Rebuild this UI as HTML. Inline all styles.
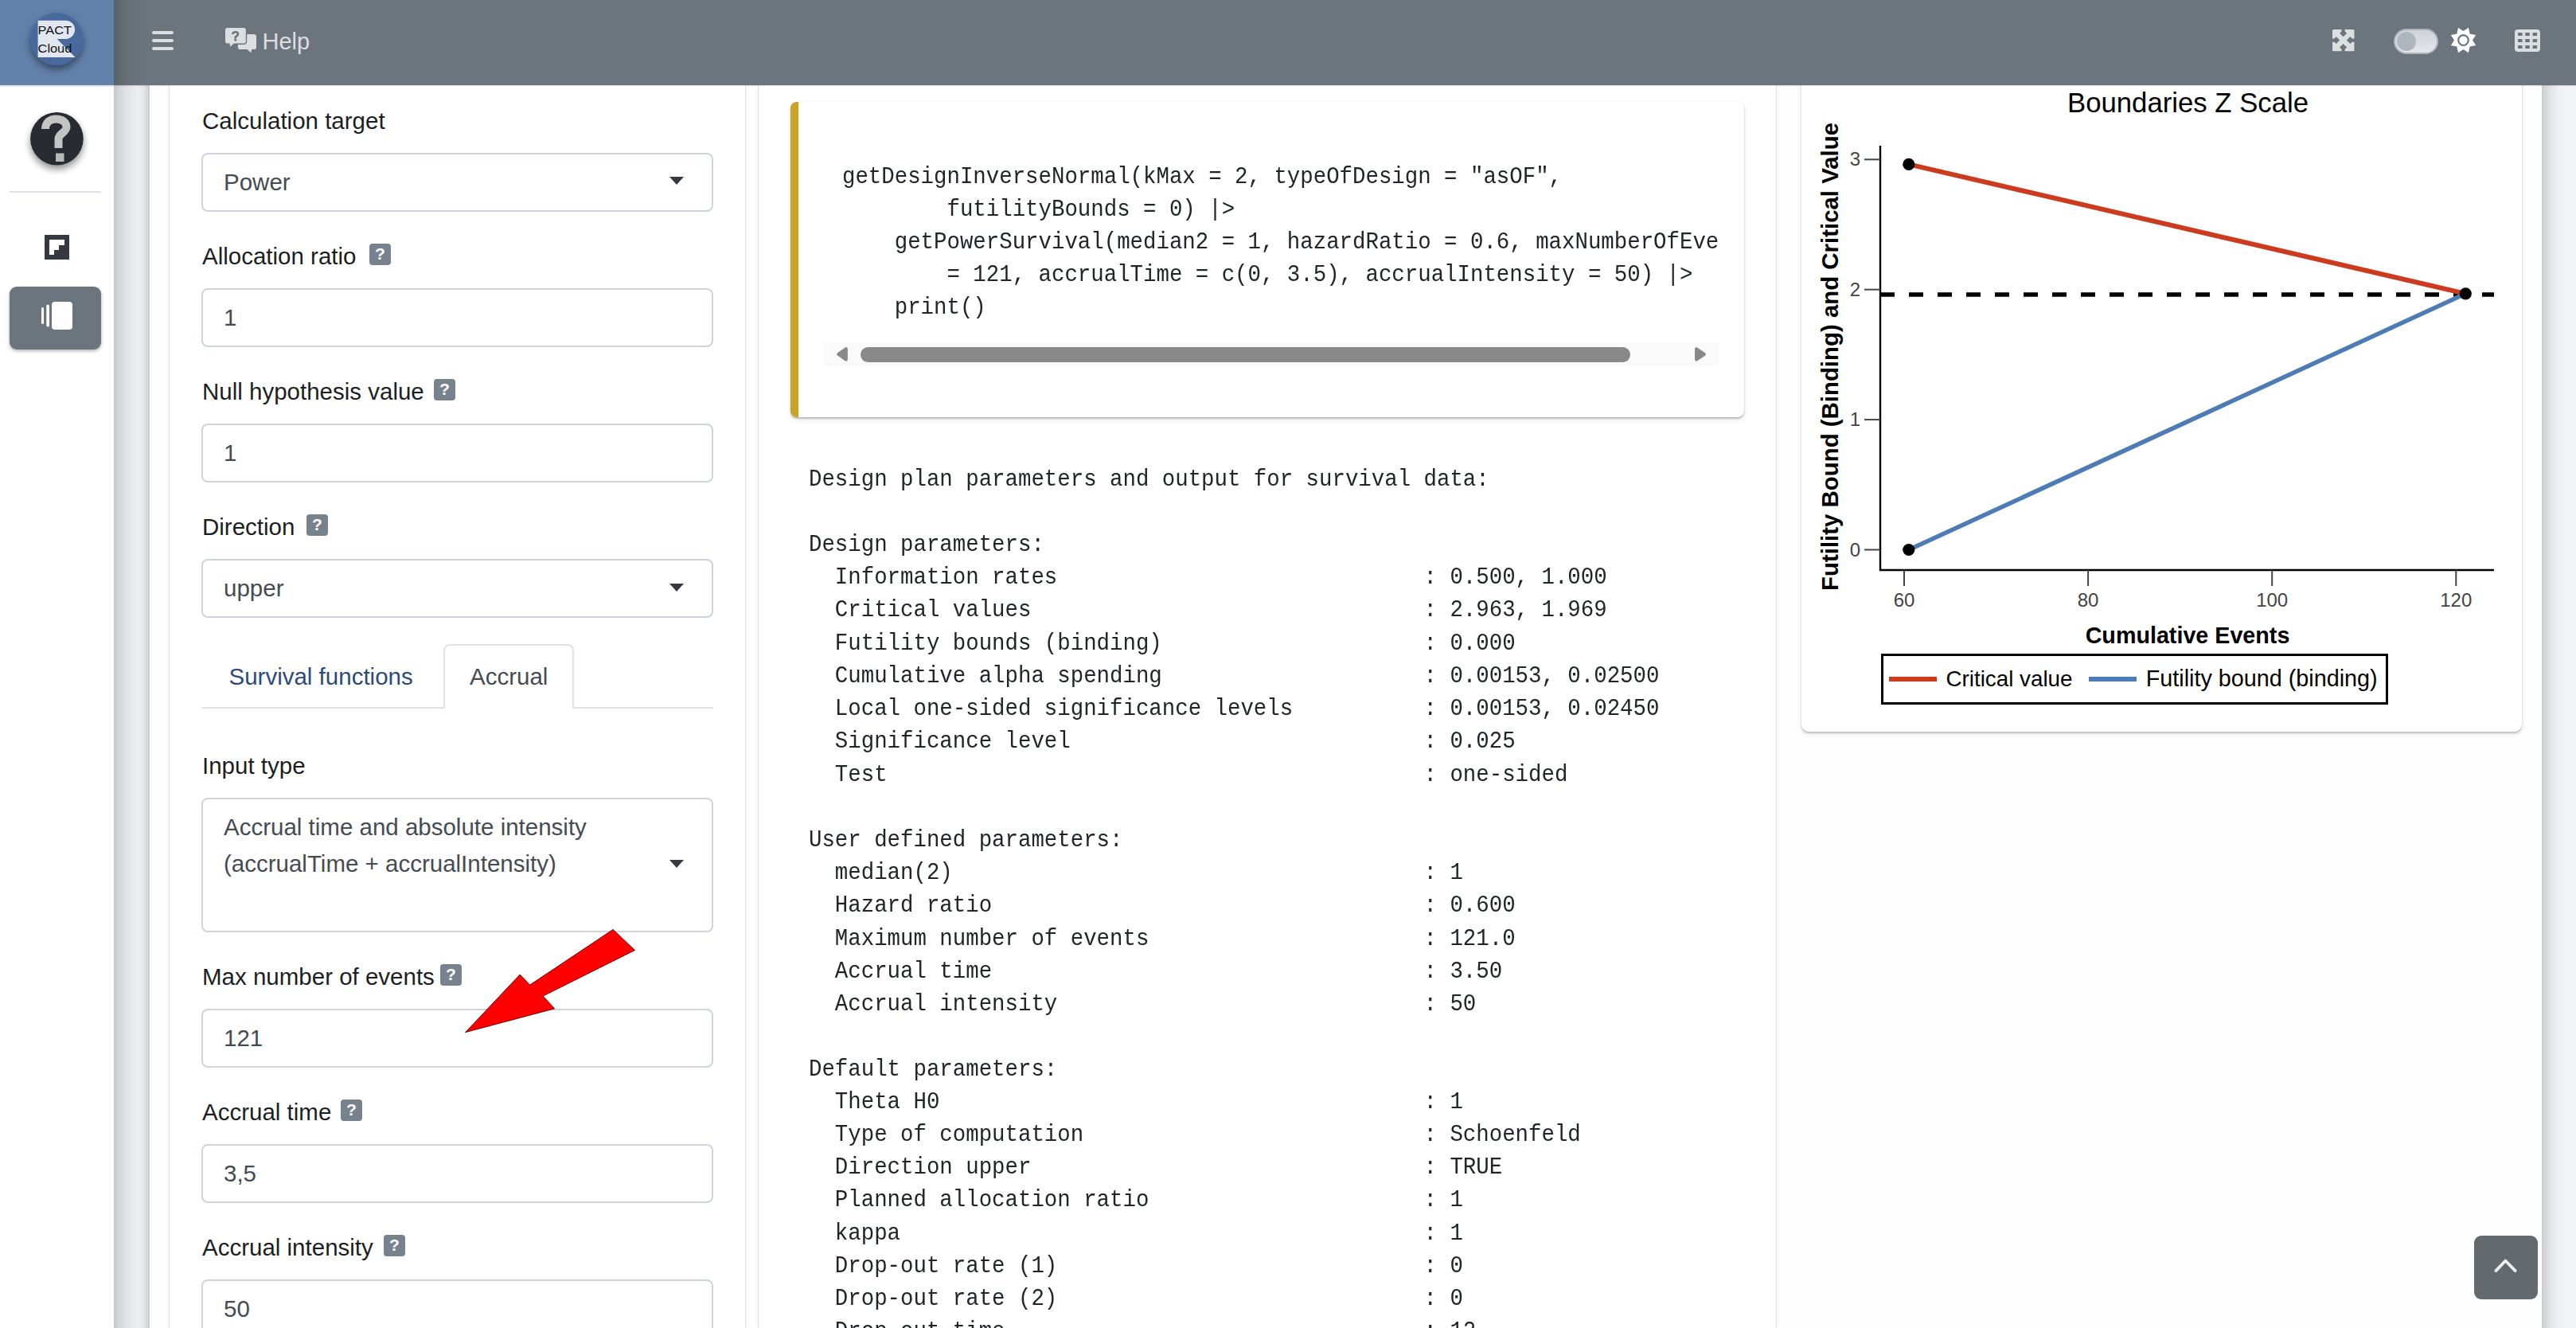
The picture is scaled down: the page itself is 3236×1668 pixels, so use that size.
<!DOCTYPE html>
<html><head><meta charset="utf-8"><title>rpact</title><style>
html,body{margin:0;padding:0}
body{width:3236px;height:1668px;overflow:hidden;position:relative;background:#f4f6f9;font-family:"Liberation Sans",sans-serif;color:#212529}
.abs{position:absolute}
#header{left:0;top:0;width:3236px;height:107px;background:#6c757d;box-shadow:0 1px 1px rgba(0,0,0,.12)}
#brand{left:0;top:0;width:143px;height:107px;background:#6180aa}
#sidebar{left:0;top:107px;width:143px;height:1561px;background:#fff;border-top:2px solid #e4e6ea;box-sizing:border-box}
#lstrip{left:143px;top:107px;width:45px;height:1561px;background:linear-gradient(90deg,#c3c5c9 0px,#d3d5d9 6px,#e4e5e9 18px,#eceef2 30px,#e4e5e9 38px,#cdcfd3 44px,#c7c9cd 45px)}
#rstrip{left:3193px;top:107px;width:43px;height:1561px;background:linear-gradient(90deg,#c9cbcf 0px,#d6d7db 4px,#e4e5e9 12px,#f0f1f5 22px,#f4f5f9 43px)}
#content{left:188px;top:107px;width:3005px;height:1561px;background:#fefefe}
#col1{left:213px;top:107px;width:723px;height:1561px;background:#fff;box-shadow:-1px 0 0 #e2e2e2,1px 0 0 #e0e0e0,0 0 8px rgba(0,0,0,.06)}
#col2{left:953px;top:107px;width:1278px;height:1561px;background:#fff;box-shadow:-1px 0 0 #e0e0e0,1px 0 0 #e2e2e2,0 0 8px rgba(0,0,0,.06)}
.lbl{position:absolute;left:254px;font-size:29.5px;color:#1b1f24;white-space:nowrap;line-height:29.5px;height:30px}
.q{position:absolute;width:27px;height:27px;background:#76828e;border-radius:4px;color:#fff;font-weight:bold;font-size:21px;text-align:center;line-height:26px}
.inp{position:absolute;left:253px;width:643px;height:74px;box-sizing:border-box;border:2px solid #ced4da;border-radius:8px;background:#fff}
.val{position:absolute;left:281px;font-size:29.5px;color:#454b52;white-space:nowrap;line-height:29.5px}
.caret{position:absolute;left:841px;width:0;height:0;border-left:9.5px solid transparent;border-right:9.5px solid transparent;border-top:10px solid #343a40}
.mono{position:absolute;font-family:"Liberation Mono",monospace;font-size:27.4px;white-space:pre;line-height:38.102px;color:#212529;margin:0;transform:scaleY(1.08);transform-origin:0 0}
.hb{position:absolute;left:191px;width:27px;height:4px;border-radius:2px;background:#dcdee0}
</style></head><body>
<div id="content" class="abs"></div><div id="col1" class="abs"></div><div id="col2" class="abs"></div>
<div class="abs" style="left:2263px;top:40px;width:905px;height:879px;background:#fff;border-radius:9px;box-shadow:0 0 1px rgba(0,0,0,.15),0 2px 2px rgba(0,0,0,.18),0 3px 7px rgba(0,0,0,.1)"></div>
<div id="lstrip" class="abs"></div><div id="rstrip" class="abs"></div>
<div id="header" class="abs"></div><div id="brand" class="abs"></div><div id="sidebar" class="abs"></div>
<div class="abs" style="left:143px;top:0;width:46px;height:107px;background:linear-gradient(90deg,rgba(0,0,0,.16),rgba(0,0,0,.08) 25%,rgba(0,0,0,.03) 55%,rgba(0,0,0,0))"></div>
<div class="hb" style="top:39px"></div>
<div class="hb" style="top:49px"></div>
<div class="hb" style="top:58.6px"></div>
<svg class="abs" style="left:276px;top:28px" width="54" height="44" viewBox="0 0 54 44">
<rect x="22.9" y="14.9" width="23.1" height="19.2" rx="3.2" fill="#dcdee0"/>
<polygon points="33.3,33 39.4,38.3 40.3,33" fill="#dcdee0"/>
<rect x="5.6" y="5.6" width="28.6" height="22.3" rx="4" fill="#6c757d"/><rect x="7" y="7" width="25.8" height="19.5" rx="2.8" fill="#dcdee0"/>
<polygon points="12.4,25 13.2,30.8 19.6,25" fill="#dcdee0"/>
<path d="M16.4 14C16.9 12.8 18.2 12.2 19.8 12.2C21.8 12.2 23 13.3 23 14.8C23 16.1 22.1 16.8 20.9 17.6C20 18.2 19.6 18.7 19.6 19.5" fill="none" stroke="#6c757d" stroke-width="2.6" stroke-linecap="round"/>
<circle cx="19.8" cy="22.1" r="1.6" fill="#6c757d"/>
</svg>
<div class="abs" style="left:329.5px;top:37.7px;font-size:29px;line-height:29px;color:#dcdee0">Help</div>
<svg class="abs" style="left:2930px;top:37px" width="28" height="28" viewBox="0 0 28 28">
<rect x="0" y="0" width="27.5" height="27.3" rx="1.6" fill="#dcdee0"/>
<path d="M9.1,4.8 L13.6,0.2999999999999998 L18.1,4.8 L13.6,9.3 Z M11.5,-1 h4.2 V4.8 h-4.2 Z M9.1,22.4 L13.6,17.9 L18.1,22.4 L13.6,26.9 Z M11.5,22.4 h4.2 V29 h-4.2 Z M0.20000000000000018,13.6 L4.7,9.1 L9.2,13.6 L4.7,18.1 Z M-1,11.5 H4.7 v4.2 H-1 Z M17.9,13.6 L22.4,9.1 L26.9,13.6 L22.4,18.1 Z M22.4,11.5 H29 v4.2 H22.4 Z" fill="#6c757d"/>
</svg>
<div class="abs" style="left:3007px;top:36px;width:56px;height:32px;box-sizing:border-box;border-radius:16px;border:2px solid #aeb4bb;background:linear-gradient(180deg,#cfd2d6,#e4e6ea)"></div>
<div class="abs" style="left:3011px;top:40px;width:24px;height:24px;border-radius:12px;background:#adb5bd"></div>
<svg class="abs" style="left:0;top:0" width="3236" height="107">
<polygon points="3101.0,34.8 3102.6,42.4 3110.2,44.0 3106.0,50.5 3110.2,57.0 3102.6,58.6 3101.0,66.2 3094.5,62.0 3088.0,66.2 3086.4,58.6 3078.8,57.0 3083.0,50.5 3078.8,44.0 3086.4,42.4 3088.0,34.8 3094.5,39.0" fill="#ffffff"/>
<circle cx="3094.5" cy="50.5" r="6.3" fill="none" stroke="#6c757d" stroke-width="2.2"/>
</svg>
<svg class="abs" style="left:3159px;top:37px" width="32" height="28" viewBox="0 0 32 28"><rect x="0" y="0" width="32" height="28" rx="4" fill="#dcdee0"/><rect x="4.0" y="4.0" width="5.5" height="4" fill="#6c757d"/><rect x="4.0" y="12.0" width="5.5" height="4" fill="#6c757d"/><rect x="4.0" y="20.0" width="5.5" height="4" fill="#6c757d"/><rect x="13.3" y="4.0" width="5.5" height="4" fill="#6c757d"/><rect x="13.3" y="12.0" width="5.5" height="4" fill="#6c757d"/><rect x="13.3" y="20.0" width="5.5" height="4" fill="#6c757d"/><rect x="22.6" y="4.0" width="5.5" height="4" fill="#6c757d"/><rect x="22.6" y="12.0" width="5.5" height="4" fill="#6c757d"/><rect x="22.6" y="20.0" width="5.5" height="4" fill="#6c757d"/></svg>
<svg class="abs" style="left:0;top:0" width="143" height="450" viewBox="0 0 143 450">
<defs>
<filter id="sh" x="-50%" y="-50%" width="200%" height="200%"><feGaussianBlur in="SourceAlpha" stdDeviation="5"/><feOffset dy="5"/><feComponentTransfer><feFuncA type="linear" slope="0.45"/></feComponentTransfer><feMerge><feMergeNode/><feMergeNode in="SourceGraphic"/></feMerge></filter>
<filter id="sh2" x="-50%" y="-50%" width="200%" height="200%"><feGaussianBlur in="SourceAlpha" stdDeviation="2"/><feOffset dy="2"/><feComponentTransfer><feFuncA type="linear" slope="0.3"/></feComponentTransfer><feMerge><feMergeNode/><feMergeNode in="SourceGraphic"/></feMerge></filter>
<clipPath id="cc"><circle cx="71" cy="49" r="33"/></clipPath>
</defs>
<circle cx="71" cy="49" r="33" fill="#46699b" filter="url(#sh)"/>
<path d="M47.6 25.7H82.4A11.6 11.6 0 0 1 82.4 48.9H71.7L94.5 72H47.6Z" fill="#e2e6ef" clip-path="url(#cc)"/>
<text x="47.6" y="43.2" font-family="Liberation Sans" font-size="15.5" fill="#111" textLength="42.3" lengthAdjust="spacingAndGlyphs">PACT</text>
<text x="47.6" y="66.3" font-family="Liberation Sans" font-size="15.5" fill="#111" textLength="42.7" lengthAdjust="spacingAndGlyphs">Cloud</text>
<circle cx="71.4" cy="174.3" r="33.3" fill="#2a2c30" filter="url(#sh)"/>
<path d="M57 162C57 153.5 63 149.5 70.5 149.5C78 149.5 83.5 153.5 83.5 159.5C83.5 166 74 168 73.5 174V186" fill="none" stroke="#c4c4c4" stroke-width="10"/>
<rect x="70" y="192.5" width="10.5" height="10.5" fill="#b9b9b9"/>
<rect x="12" y="240" width="115" height="2" fill="#dee2e6"/>
<rect x="56" y="295" width="31" height="31" fill="#343a40"/>
<path d="M62 301h19v7h-7v6h-6v6h-6z" fill="#fff"/>
<rect x="12" y="360" width="115" height="79" rx="9" fill="#6c757d" filter="url(#sh2)"/>
<rect x="52" y="386" width="3" height="21" rx="1.5" fill="#fff"/>
<rect x="58.3" y="382.5" width="3.7" height="28" rx="1.8" fill="#fff"/>
<rect x="65" y="379" width="26" height="35" rx="4" fill="#fff"/>
</svg>
<div class="lbl" style="top:137px">Calculation target</div>
<div class="inp" style="top:192px;height:74px"></div>
<div class="val" style="top:214px">Power</div>
<div class="caret" style="top:222px"></div>
<div class="lbl" style="top:307px">Allocation ratio</div>
<div class="q" style="left:464px;top:306px">?</div>
<div class="inp" style="top:362px;height:74px"></div>
<div class="val" style="top:384px">1</div>
<div class="lbl" style="top:477px">Null hypothesis value</div>
<div class="q" style="left:545px;top:476px">?</div>
<div class="inp" style="top:532px;height:74px"></div>
<div class="val" style="top:554px">1</div>
<div class="lbl" style="top:647px">Direction</div>
<div class="q" style="left:385px;top:646px">?</div>
<div class="inp" style="top:702px;height:74px"></div>
<div class="val" style="top:724px">upper</div>
<div class="caret" style="top:733px"></div>
<div class="abs" style="left:254px;top:888px;width:642px;height:2px;background:#dee2e6"></div>
<div class="abs" style="left:557px;top:809px;width:164px;height:81px;box-sizing:border-box;border:2px solid #dee2e6;border-bottom:none;border-radius:8px 8px 0 0;background:#fff"></div>
<div class="abs" style="left:287.5px;top:835px;font-size:29.5px;line-height:29.5px;color:#2c4a7a;white-space:nowrap">Survival functions</div>
<div class="abs" style="left:590px;top:835px;font-size:29.5px;line-height:29.5px;color:#454b52;white-space:nowrap">Accrual</div>
<div class="lbl" style="top:947px">Input type</div>
<div class="inp" style="top:1002px;height:169px"></div>
<div class="val" style="top:1024px">Accrual time and absolute intensity</div>
<div class="val" style="top:1070px">(accrualTime + accrualIntensity)</div>
<div class="caret" style="top:1080px"></div>
<div class="lbl" style="top:1212px">Max number of events</div>
<div class="q" style="left:553px;top:1211px">?</div>
<div class="inp" style="top:1267px;height:74px"></div>
<div class="val" style="top:1289px">121</div>
<div class="lbl" style="top:1382px">Accrual time</div>
<div class="q" style="left:428px;top:1381px">?</div>
<div class="inp" style="top:1437px;height:74px"></div>
<div class="val" style="top:1459px">3,5</div>
<div class="lbl" style="top:1552px">Accrual intensity</div>
<div class="q" style="left:482px;top:1551px">?</div>
<div class="inp" style="top:1607px;height:74px"></div>
<div class="val" style="top:1629px">50</div>
<svg class="abs" style="left:0;top:0" width="3236" height="1668" viewBox="0 0 3236 1668">
<polygon points="584.5,1296.7 653.1,1224.1 665.6,1237.1 770.1,1167.4 797.5,1193.5 682.2,1251.1 696.7,1266.9" fill="#ff0000" stroke="#3a0000" stroke-width="0.8"/>
</svg>
<div class="abs" style="left:993px;top:128px;width:1198px;height:396px;background:#fff;border-radius:8px;box-shadow:0 0 1px rgba(0,0,0,.12),0 2px 2px rgba(0,0,0,.2),0 3px 7px rgba(0,0,0,.1);overflow:hidden"><div style="position:absolute;left:0;top:0;width:10px;height:396px;background:#cba326"></div></div>
<div class="abs" style="left:1000px;top:150px;width:1159px;height:270px;overflow:hidden"><pre class="mono" style="left:58px;top:52px">getDesignInverseNormal(kMax = 2, typeOfDesign = "asOF",
        futilityBounds = 0) |>
    getPowerSurvival(median2 = 1, hazardRatio = 0.6, maxNumberOfEvents
        = 121, accrualTime = c(0, 3.5), accrualIntensity = 50) |>
    print()</pre></div>
<div class="abs" style="left:1035px;top:430px;width:1124px;height:30px;background:#fafafa"></div>
<div class="abs" style="left:1081px;top:436px;width:967px;height:19px;border-radius:9.5px;background:#898989"></div>
<svg class="abs" style="left:0;top:400px" width="2200" height="80" viewBox="0 400 2200 80"><polygon points="1053.3,444.9 1062.8,438.3 1062.8,451.6" fill="#8a8a8a" stroke="#8a8a8a" stroke-width="4.2" stroke-linejoin="round"/><polygon points="2140.8,444.9 2131.1,438.3 2131.1,451.6" fill="#8a8a8a" stroke="#8a8a8a" stroke-width="4.2" stroke-linejoin="round"/></svg>
<pre class="mono" style="left:1016px;top:582.3px">Design plan parameters and output for survival data:

Design parameters:
  Information rates                            : 0.500, 1.000
  Critical values                              : 2.963, 1.969
  Futility bounds (binding)                    : 0.000
  Cumulative alpha spending                    : 0.00153, 0.02500
  Local one-sided significance levels          : 0.00153, 0.02450
  Significance level                           : 0.025
  Test                                         : one-sided

User defined parameters:
  median(2)                                    : 1
  Hazard ratio                                 : 0.600
  Maximum number of events                     : 121.0
  Accrual time                                 : 3.50
  Accrual intensity                            : 50

Default parameters:
  Theta H0                                     : 1
  Type of computation                          : Schoenfeld
  Direction upper                              : TRUE
  Planned allocation ratio                     : 1
  kappa                                        : 1
  Drop-out rate (1)                            : 0
  Drop-out rate (2)                            : 0
  Drop-out time                                : 12
  Follow-up time                               : 10</pre>
<svg class="abs" style="left:0;top:0" width="3236" height="1668" viewBox="0 0 3236 1668" font-family="Liberation Sans">
<text x="2597" y="141" font-size="34.5" fill="#000" textLength="303" lengthAdjust="spacingAndGlyphs">Boundaries Z Scale</text>
<line x1="2362" y1="183" x2="2362" y2="717" stroke="#000" stroke-width="2.4"/>
<line x1="2361" y1="716" x2="3133" y2="716" stroke="#000" stroke-width="2.4"/>
<line x1="2342" y1="690.5" x2="2362" y2="690.5" stroke="#444" stroke-width="2"/>
<text x="2337" y="698.5" font-size="24" fill="#444" text-anchor="end">0</text>
<line x1="2342" y1="527.1" x2="2362" y2="527.1" stroke="#444" stroke-width="2"/>
<text x="2337" y="535.1" font-size="24" fill="#444" text-anchor="end">1</text>
<line x1="2342" y1="363.7" x2="2362" y2="363.7" stroke="#444" stroke-width="2"/>
<text x="2337" y="371.7" font-size="24" fill="#444" text-anchor="end">2</text>
<line x1="2342" y1="200.3" x2="2362" y2="200.3" stroke="#444" stroke-width="2"/>
<text x="2337" y="208.3" font-size="24" fill="#444" text-anchor="end">3</text>
<line x1="2392.0" y1="716" x2="2392.0" y2="736" stroke="#444" stroke-width="2"/>
<text x="2392.0" y="762.4" font-size="24" fill="#444" text-anchor="middle">60</text>
<line x1="2623.1" y1="716" x2="2623.1" y2="736" stroke="#444" stroke-width="2"/>
<text x="2623.1" y="762.4" font-size="24" fill="#444" text-anchor="middle">80</text>
<line x1="2854.2" y1="716" x2="2854.2" y2="736" stroke="#444" stroke-width="2"/>
<text x="2854.2" y="762.4" font-size="24" fill="#444" text-anchor="middle">100</text>
<line x1="3085.3" y1="716" x2="3085.3" y2="736" stroke="#444" stroke-width="2"/>
<text x="3085.3" y="762.4" font-size="24" fill="#444" text-anchor="middle">120</text>
<line x1="2362" y1="370" x2="3133" y2="370" stroke="#000" stroke-width="5.5" stroke-dasharray="18 18"/>
<line x1="2397.8" y1="206.3" x2="3097.3" y2="368.8" stroke="#cd3b1e" stroke-width="6"/>
<line x1="2397.8" y1="690.5" x2="3097.3" y2="368.8" stroke="#4c7bb5" stroke-width="5.5"/>
<circle cx="2397.8" cy="206.3" r="7.6" fill="#000"/>
<circle cx="2397.8" cy="690.5" r="7.6" fill="#000"/>
<circle cx="3097.3" cy="368.8" r="7.6" fill="#000"/>
<text transform="translate(2308.5,448) rotate(-90)" font-size="29.4" font-weight="bold" fill="#000" text-anchor="middle" textLength="588" lengthAdjust="spacingAndGlyphs">Futility Bound (Binding) and Critical Value</text>
<text x="2748" y="808.4" font-size="28.7" font-weight="bold" fill="#000" text-anchor="middle">Cumulative Events</text>
<rect x="2364.5" y="822.5" width="634" height="61" fill="#fff" stroke="#000" stroke-width="3"/>
<line x1="2373" y1="853" x2="2433" y2="853" stroke="#cd3b1e" stroke-width="6"/>
<text x="2444.5" y="862.2" font-size="27.8" fill="#000" textLength="159" lengthAdjust="spacingAndGlyphs">Critical value</text>
<line x1="2624" y1="853" x2="2684" y2="853" stroke="#4c7bb5" stroke-width="6"/>
<text x="2695.7" y="862.2" font-size="28.8" fill="#000" textLength="291" lengthAdjust="spacingAndGlyphs">Futility bound (binding)</text>
</svg>
<div class="abs" style="left:3108px;top:1552px;width:80px;height:80px;border-radius:9px;background:#63696d"></div>
<svg class="abs" style="left:3108px;top:1552px" width="80" height="80"><polyline points="27.4,44.1 39.4,31.5 51.7,44.1" fill="none" stroke="#eeeeee" stroke-width="3.8" stroke-linecap="round" stroke-linejoin="round"/></svg>
</body></html>
